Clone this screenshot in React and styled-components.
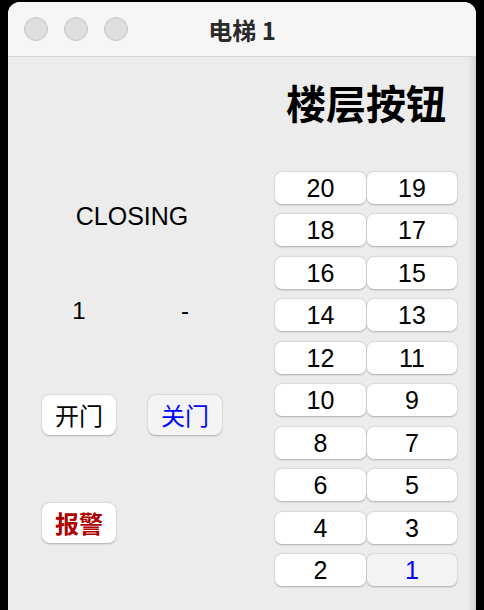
import React from "react";
import styled, { createGlobalStyle } from "styled-components";

const Global = createGlobalStyle`
  html, body { margin: 0; padding: 0; background: #000; }
  body { width: 484px; height: 610px; overflow: hidden; }
  * { box-sizing: border-box; }
`;

const FONT = `"Liberation Sans", "Noto Sans CJK SC", sans-serif`;

const Window = styled.div`
  margin: 2px 0 0 8px;
  width: 468px;
  height: 620px;
  border-radius: 12px;
  overflow: hidden;
  background: #ececec;
  display: flex;
  flex-direction: column;
  box-shadow: inset -9px 0 8px -7px rgba(0, 0, 0, 0.14);
  font-family: ${FONT};
`;

const TitleBar = styled.div`
  height: 55px;
  flex: none;
  display: flex;
  align-items: center;
  position: relative;
  background: #f6f6f6;
  border-bottom: 1px solid #d4d4d4;
  padding-left: 16px;
  gap: 16px;
`;

const Light = styled.span`
  width: 24px;
  height: 24px;
  border-radius: 50%;
  background: #dedede;
  border: 1px solid #c6c6c6;
`;

const Title = styled.div`
  position: absolute;
  left: 0;
  right: 0;
  top: 0;
  bottom: 0;
  display: flex;
  align-items: center;
  justify-content: center;
  font-family: "Noto Sans CJK SC", sans-serif;
  font-weight: 700;
  font-size: 24px;
  color: #2a2a2a;
  pointer-events: none;
`;

const Content = styled.div`
  flex: 1;
  display: grid;
  grid-template-columns: 248px 1fr;
`;

const LeftCol = styled.div`
  display: flex;
  flex-direction: column;
  align-items: center;
  padding-top: 144px;
`;

const Status = styled.div`
  font-size: 25px;
  line-height: 30px;
  color: #000;
`;

const Pair = styled.div`
  display: grid;
  grid-template-columns: 74px 74px;
  column-gap: 32px;
  margin-top: ${(p) => p.$mt}px;
  width: 180px;
  justify-items: center;
  align-self: flex-start;
  margin-left: 34px;
`;

const Info = styled.div`
  font-size: 24px;
  line-height: 28px;
  color: #000;
`;

const ActionBtn = styled.button`
  width: 74px;
  height: 40px;
  border: none;
  border-radius: 8px;
  background: ${(p) => (p.$pressed ? "#f4f4f4" : "#ffffff")};
  box-shadow: 0 0.5px 2px rgba(0, 0, 0, 0.28);
  font-family: "Noto Sans CJK SC", sans-serif;
  font-size: 24px;
  line-height: 40px;
  padding: 0;
  color: ${(p) => p.$color || "#000"};
  font-weight: ${(p) => (p.$bold ? 700 : 400)};
`;

const RightCol = styled.div`
  display: flex;
  flex-direction: column;
  align-items: center;
  padding-top: 21px;
`;

const Heading = styled.div`
  font-family: "Noto Sans CJK SC", sans-serif;
  font-weight: 700;
  font-size: 40px;
  line-height: 48px;
  color: #000;
`;

const FloorGrid = styled.div`
  margin-top: 46px;
  display: grid;
  grid-template-columns: 91px 90px;
  column-gap: 1px;
  row-gap: 10.44px;
`;

const FloorBtn = styled.button`
  height: 32px;
  border: none;
  border-radius: 7px;
  background: ${(p) => (p.$active ? "#f3f3f3" : "#ffffff")};
  box-shadow: 0 0.5px 2px rgba(0, 0, 0, 0.28);
  font-family: ${FONT};
  font-size: 25px;
  line-height: 32px;
  padding: 0;
  color: ${(p) => (p.$active ? "#0000ff" : "#000")};
`;

const floors = Array.from({ length: 20 }, (_, i) => 20 - i);

export default function App() {
  return (
    <>
      <Global />
      <Window>
        <TitleBar>
          <Light />
          <Light />
          <Light />
          <Title>电梯 1</Title>
        </TitleBar>
        <Content>
          <LeftCol>
            <Status>CLOSING</Status>
            <Pair $mt={66}>
              <Info>1</Info>
              <Info>-</Info>
            </Pair>
            <Pair $mt={70}>
              <ActionBtn>开门</ActionBtn>
              <ActionBtn $pressed $color="#0000ff">关门</ActionBtn>
            </Pair>
            <Pair $mt={68}>
              <ActionBtn $color="#b00000" $bold>报警</ActionBtn>
            </Pair>
          </LeftCol>
          <RightCol>
            <Heading>楼层按钮</Heading>
            <FloorGrid>
              {floors.map((f) => (
                <FloorBtn key={f} $active={f === 1}>
                  {f}
                </FloorBtn>
              ))}
            </FloorGrid>
          </RightCol>
        </Content>
      </Window>
    </>
  );
}
